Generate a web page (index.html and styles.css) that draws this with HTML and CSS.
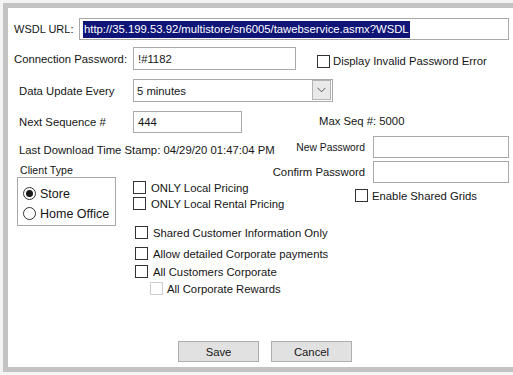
FILE: index.html
```html
<!DOCTYPE html>
<html>
<head>
<meta charset="utf-8">
<link rel="stylesheet" href="styles.css">
</head>
<body>
<div class="frame">
  <div class="row r1">
    <span class="lbl lbl-url">WSDL URL:</span>
    <div class="field f-url"><span class="sel">http://35.199.53.92/multistore/sn6005/tawebservice.asmx?WSDL</span></div>
  </div>
  <div class="row r2">
    <span class="lbl lbl-conn">Connection Password:</span>
    <div class="field f-pw">!#1182</div>
    <div class="chk chk-err"><span class="box"></span><span>Display Invalid Password Error</span></div>
  </div>
  <div class="row r3">
    <span class="lbl lbl-in">Data Update Every</span>
    <div class="field f-sel"><span>5 minutes</span><span class="dd"><svg width="9" height="6" viewBox="0 0 9 6"><polyline points="0.5,0.8 4.5,4.8 8.5,0.8" fill="none" stroke="#555" stroke-width="1"/></svg></span></div>
  </div>
  <div class="row r4">
    <span class="lbl lbl-in">Next Sequence #</span>
    <div class="field f-seq">444</div>
    <span class="maxseq">Max Seq #: 5000</span>
  </div>
  <div class="lower">
    <div class="stamp">Last Download Time Stamp: 04/29/20 01:47:04 PM</div>
    <div class="pwrow newpw"><span class="pwl pwl-new">New Password</span><div class="field f-np"></div></div>
    <div class="pwrow confpw"><span class="pwl">Confirm Password</span><div class="field f-np"></div></div>
    <div class="client">
      <div class="client-lbl">Client Type</div>
      <div class="group">
        <div class="radio"><span class="dot on"></span><span>Store</span></div>
        <div class="radio r-home"><span class="dot"></span><span>Home Office</span></div>
      </div>
    </div>
    <div class="checks">
      <div class="chk-top">
        <div class="chk-col">
          <div class="chk"><span class="box"></span><span>ONLY Local Pricing</span></div>
          <div class="chk c-rental"><span class="box"></span><span>ONLY Local Rental Pricing</span></div>
        </div>
        <div class="chk c-grids"><span class="box"></span><span>Enable Shared Grids</span></div>
      </div>
      <div class="chk c-shared"><span class="box"></span><span>Shared Customer Information Only</span></div>
      <div class="chk c-allow"><span class="box"></span><span>Allow detailed Corporate payments</span></div>
      <div class="chk c-allcust"><span class="box"></span><span>All Customers Corporate</span></div>
      <div class="chk c-rewards"><span class="box disabled"></span><span>All Corporate Rewards</span></div>
    </div>
  </div>
  <div class="buttons">
    <button class="btn">Save</button>
    <button class="btn">Cancel</button>
  </div>
</div>
</body>
</html>
```
FILE: styles.css
```css
html, body {
  margin: 0;
  padding: 0;
  background: #f4f4f4;
}
body {
  font-family: "Liberation Sans", Arial, sans-serif;
  font-size: 11.3px;
  color: #151515;
}
.frame {
  margin: 3px 0 0 3px;
  height: 359px;
  background: #ffffff;
  border-left: 5px solid #c3c3c3;
  border-top: 5px solid #c3c3c3;
  border-bottom: 5px solid #c3c3c3;
  display: flex;
  flex-direction: column;
}
.row {
  display: flex;
  align-items: center;
  flex-shrink: 0;
}
.r1 { margin-top: 10px; height: 22px; padding-left: 6px; }
.r2 { margin-top: 7px; height: 23px; padding-left: 6px; }
.r3 { margin-top: 9px; height: 23px; padding-left: 11px; }
.r4 { margin-top: 9px; height: 22px; padding-left: 11px; }
.lbl { flex: none; white-space: nowrap; }
.lbl-url {
  width: 65px;
  font-family: "Liberation Sans Narrow", "Liberation Sans", Arial, sans-serif;
  font-size: 11px;
}
.lbl-conn { width: 119px; }
.lbl-in { width: 114px; }
.field {
  box-sizing: border-box;
  border: 1px solid #a9a9a9;
  background: #fff;
  display: flex;
  align-items: center;
  padding-left: 3px;
  height: 100%;
  white-space: nowrap;
  flex: none;
}
.f-url { width: 430px; }
.sel {
  background: #0f1577;
  color: #fff;
  line-height: 17px;
  padding: 0 1px 0 1px;
}
.f-pw { width: 163px; padding-left: 4px; }
.f-sel { width: 200px; }
.dd {
  margin-left: auto;
  margin-right: 1px;
  margin-bottom: 1px;
  width: 19px;
  height: 20px;
  box-sizing: border-box;
  background: #e9e9e9;
  border: 1px solid #b3b3b3;
  display: flex;
  align-items: center;
  justify-content: center;
}
.f-seq { width: 109px; padding-left: 4px; }
.maxseq { margin-left: 77px; margin-top: -2px; }
.chk {
  display: flex;
  align-items: center;
  height: 13px;
  white-space: nowrap;
}
.box {
  width: 13px;
  height: 13px;
  box-sizing: border-box;
  border: 1px solid #333;
  background: #fff;
  margin-right: 5px;
  flex: none;
}
.box.disabled { border-color: #cfcfcf; }
.chk-err { margin-left: 21px; margin-top: 5px; }
.chk-err .box { margin-right: 3px; }
.lower {
  display: grid;
  grid-template-columns: 125px 137px 1fr;
  grid-template-rows: 26px 22px auto;
  grid-template-areas:
    "stamp stamp newpw"
    "client . confpw"
    "client checks checks";
  flex-shrink: 0;
}
.stamp {
  grid-area: stamp;
  padding-left: 11px;
  padding-top: 10px;
  line-height: 14px;
  white-space: nowrap;
}
.pwrow {
  display: flex;
  justify-content: flex-end;
  align-items: center;
  align-self: start;
  padding-right: 4px;
}
.pwl { margin-right: 8px; white-space: nowrap; }
.pwl-new {
  font-family: "Liberation Sans Narrow", "Liberation Sans", Arial, sans-serif;
  font-size: 10.3px;
}
.f-np { width: 136px; height: 22px; }
.newpw { grid-area: newpw; margin-top: 3px; }
.confpw { grid-area: confpw; margin-top: 2px; }
.client { grid-area: client; }
.client-lbl {
  margin-top: 4px;
  padding-left: 12px;
  line-height: 14px;
  font-size: 10.6px;
}
.group {
  margin-left: 9px;
  width: 99px;
  height: 49px;
  box-sizing: border-box;
  border: 1px solid #a8a8a8;
  padding: 9px 0 0 5px;
}
.radio {
  display: flex;
  align-items: center;
  height: 13px;
  font-size: 12.5px;
  white-space: nowrap;
}
.r-home { margin-top: 7px; }
.dot {
  width: 13px;
  height: 13px;
  box-sizing: border-box;
  border: 1px solid #333;
  border-radius: 50%;
  margin-right: 4px;
  display: flex;
  align-items: center;
  justify-content: center;
  flex: none;
}
.dot.on::after {
  content: "";
  width: 7px;
  height: 7px;
  border-radius: 50%;
  background: #1a1a1a;
}
.checks { grid-area: checks; }
.chk-top { display: flex; }
.chk-col { width: 222px; }
.c-rental { margin-top: 3px; }
.c-grids { margin-top: 8px; }
.c-grids .box { margin-right: 4px; }
.c-shared { margin-top: 16px; margin-left: 2px; }
.c-allow { margin-top: 8px; margin-left: 2px; }
.c-allcust { margin-top: 5px; margin-left: 2px; }
.c-rewards { margin-top: 4px; margin-left: 17px; }
.c-rewards .box { margin-right: 4px; }
.buttons {
  margin-top: auto;
  margin-bottom: 5px;
  padding-left: 170px;
  display: flex;
  gap: 12px;
  flex-shrink: 0;
}
.btn {
  width: 81px;
  height: 21px;
  font-family: "Liberation Sans", Arial, sans-serif;
  font-size: 11.3px;
  color: #151515;
  background: #e1e1e1;
  border: 1px solid #adadad;
  padding: 0;
}
```
